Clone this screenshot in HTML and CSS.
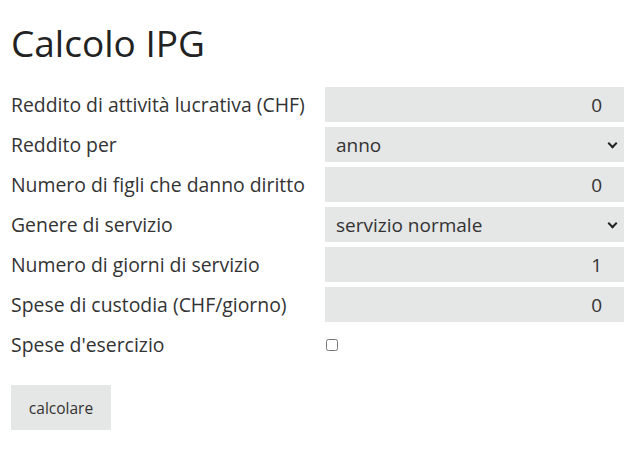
FILE: index.html
```html
<!DOCTYPE html>
<html lang="it">

<head>
  <meta charset="UTF-8">
  <meta name="viewport" content="width=device-width, initial-scale=1.0">
  <title>Calcolo IPG</title>
  <link rel="stylesheet" href="styles.css">
</head>

<body>
  <div class="page">
    <h1>Calcolo IPG</h1>
    <form class="calc">
      <label for="reddito">Reddito di attività lucrativa (CHF)</label>
      <input id="reddito" class="num" type="text" value="0">

      <label for="per">Reddito per</label>
      <div class="sel">
        <select id="per">
          <option>anno</option>
          <option>mese</option>
          <option>giorno</option>
        </select>
      </div>

      <label for="figli">Numero di figli che danno diritto</label>
      <input id="figli" class="num" type="text" value="0">

      <label for="genere">Genere di servizio</label>
      <div class="sel">
        <select id="genere">
          <option>servizio normale</option>
        </select>
      </div>

      <label for="giorni">Numero di giorni di servizio</label>
      <input id="giorni" class="num" type="text" value="1">

      <label for="custodia">Spese di custodia (CHF/giorno)</label>
      <input id="custodia" class="num" type="text" value="0">

      <label for="esercizio">Spese d'esercizio</label>
      <div class="check"><input id="esercizio" type="checkbox"></div>
    </form>
    <button class="go" type="button">calcolare</button>
  </div>
</body>

</html>
```

FILE: styles.css
```css
* {
  margin: 0;
  padding: 0;
  box-sizing: border-box;
  font-family: "Open Sans", "Noto Sans", Arial, sans-serif;
}

body {
  color: #333;
  background: #fff;
}

.page {
  padding: 20px 16px 0 11px;
}

h1 {
  font-size: 37px;
  font-weight: 400;
  line-height: 46px;
  color: #222;
  margin-bottom: 21px;
}

.calc {
  display: grid;
  grid-template-columns: 314px 299px;
  grid-auto-rows: 35px;
  row-gap: 5px;
  align-items: center;
}

.calc label {
  font-size: 19.4px;
}

.num {
  width: 100%;
  height: 35px;
  border: 0;
  background: #e5e6e6;
  color: #333;
  font-size: 19px;
  text-align: right;
  padding: 0 22px 0 12px;
  outline: none;
}

.sel {
  position: relative;
  height: 35px;
}

.sel select {
  appearance: none;
  width: 100%;
  height: 35px;
  border: 0;
  background: #e5e6e6;
  color: #333;
  font-size: 19px;
  padding: 0 28px 0 11px;
  outline: none;
}

.sel::after {
  content: '';
  position: absolute;
  right: 8px;
  top: 13px;
  width: 5px;
  height: 5px;
  border-right: 2px solid #222;
  border-bottom: 2px solid #222;
  transform: rotate(45deg);
  pointer-events: none;
}

.check {
  display: flex;
  align-items: center;
}

.check input {
  width: 12px;
  height: 12px;
  margin-left: 1px;
}

.go {
  margin-top: 23px;
  width: 100px;
  height: 45px;
  border: 0;
  background: #e5e6e6;
  color: #333;
  font-size: 15.5px;
}
```
